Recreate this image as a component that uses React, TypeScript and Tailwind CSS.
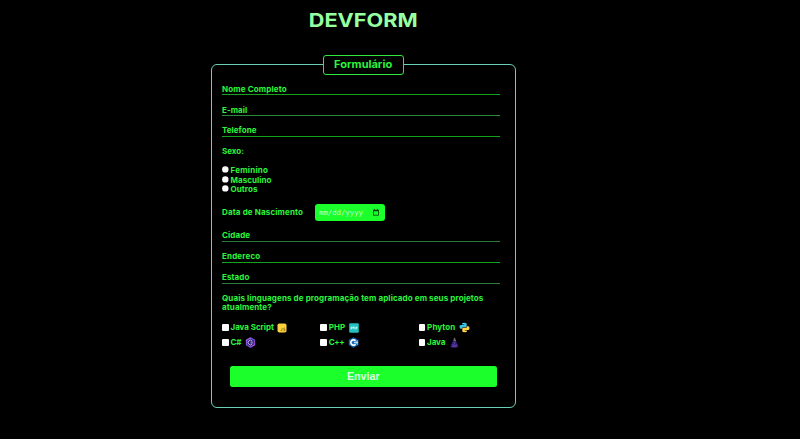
import type { ReactNode } from "react";

function Field({ label, track, line }: { label: string; track: string; line: string }) {
  return (
    <div className="h-[20.8px] w-[278px]">
      <div className={`flex h-[12.2px] items-center border-b pt-[1.8px] ${line}`}>
        <span className={track}>{label}</span>
      </div>
    </div>
  );
}

function Radio({ label, track }: { label: string; track: string }) {
  return (
    <label className="flex h-[9.6px] items-center gap-[1.5px]">
      <svg className="mb-[2px] size-[7px]" viewBox="0 0 7 7">
        <circle cx="3.3" cy="3.4" r="3.2" fill="#fff" />
      </svg>
      <span className={track}>{label}</span>
    </label>
  );
}

function Check({ label, track, children }: { label: string; track: string; children: ReactNode }) {
  return (
    <label className="flex h-[15px] items-center">
      <span className="mr-[2px] size-[6.5px] rounded-[1px] bg-white" />
      <span className={track}>{label}</span>
      <span className="ml-[3.5px] mt-[1px]">{children}</span>
    </label>
  );
}

function JsIcon() {
  return (
    <svg className="size-[10px]" viewBox="0 0 10 10">
      <rect x=".5" y=".5" width="9" height="9" rx="1.8" fill="#fbd13c" />
      <path d="M5 5v2.5H3.6M8 5.2H6.6v1.1H8v1.3H6.4" fill="none" stroke="#a57a22" strokeWidth=".8" />
    </svg>
  );
}

function PhpIcon() {
  return (
    <svg className="size-[10px]" viewBox="0 0 10 10">
      <rect x=".2" y=".2" width="9.6" height="9.6" rx="1" fill="#25bfc0" />
      <path d="M2 6.5V4h1.3v1.3H2M4.4 3.3v2.5M4.4 4.4h1.2v1.4M6.8 6.5V4H8v1.3H6.8" fill="none" stroke="#d5ffff" strokeWidth=".7" />
    </svg>
  );
}

function PythonIcon() {
  return (
    <svg className="size-[11px]" viewBox="0 0 11 11">
      <path d="M3 3V1.8Q3 .7 5.3.7T7.7 1.8v2.5q0 1-1 1H4q-1 0-1 1.5H1.8Q.5 6.8.5 4.8T1.8 3h3.4v-.4H3z" fill="#39c5df" />
      <path d="M8 8v1.2q0 1.1-2.3 1.1T3.3 9.2V6.7q0-1 1-1H7q1 0 1-1.5h1.2q1.3 0 1.3 2T9.2 8H5.8v.4H8z" fill="#ffd447" />
      <circle cx="4.2" cy="1.7" r=".4" fill="#fff" />
      <circle cx="6.8" cy="9.3" r=".4" fill="#fff" />
    </svg>
  );
}

function CSharpIcon() {
  return (
    <svg className="size-[11px]" viewBox="0 0 11 11">
      <defs>
        <linearGradient id="cs" x1="0" y1="0" x2="1" y2="1">
          <stop offset="0" stopColor="#a96ae8" />
          <stop offset=".5" stopColor="#5c45c0" />
          <stop offset="1" stopColor="#b052dc" />
        </linearGradient>
      </defs>
      <path d="M5.5 1 9.4 3.2v4.6L5.5 10 1.6 7.8V3.2z" fill="#2a1a66" stroke="url(#cs)" strokeWidth="1.5" strokeLinejoin="round" />
      <path d="M7.2 4A2.3 2.3 0 1 0 7.2 7" fill="none" stroke="#cbb5f5" strokeWidth=".9" />
      <path d="M5.4 5h2.4M5.4 6h2.4M6.2 4.4v2.3M7.1 4.4v2.3" stroke="#c8b4ef" strokeWidth=".4" />
    </svg>
  );
}

function CppIcon() {
  return (
    <svg className="size-[11px]" viewBox="0 0 11 11">
      <path d="M5.5.3 10.2 3v5L5.5 10.7.8 8V3z" fill="#1769b5" />
      <path d="M10.2 3 5.5 5.5 10.2 8z" fill="#5ba9e6" />
      <path d="M7.5 3.8A2.65 2.65 0 1 0 7.5 7.2" fill="none" stroke="#fff" strokeWidth="1.6" />
      <path d="M6.2 5.5h1.6M7 4.7v1.6M8.2 5.5h1.6M9 4.7v1.6" stroke="#fff" strokeWidth=".5" />
    </svg>
  );
}

function JavaIcon() {
  return (
    <svg className="size-[11px]" viewBox="0 0 11 11">
      <path d="M6 .3Q3.9 2 4.4 3.4L5 5h1.3L7.2 3.6Q6 2.5 6 .3z" fill="#706579" />
      <path d="M3.4 4.8 5.5 4l2 1 .8 3 1.4 1.4-2 1H3l-2-1 1.8-1.2z" fill="#332080" />
      <path d="M2.4 7.3 5 8.4l3.7-.5M3 9.6l4.6.1" fill="none" stroke="#7041b5" strokeWidth=".8" />
      <path d="M4.7 5.2 6 6.3" stroke="#9a719d" strokeWidth=".6" />
    </svg>
  );
}

function CalendarIcon() {
  return (
    <svg className="h-[7px] w-[6px]" viewBox="0 0 6 7">
      <rect x=".5" y="1.2" width="5" height="5" fill="none" stroke="#073c0b" strokeWidth=".8" />
      <path d="M.3 1.6h5.4M1.5.2v1M4.5.2v1" stroke="#073c0b" strokeWidth="1.1" />
    </svg>
  );
}

export default function App() {
  return (
    <div className="h-[439px] w-[800px] overflow-hidden bg-black font-['Inter','Liberation_Sans',sans-serif] text-[8px] leading-[9.6px] font-bold whitespace-nowrap text-[#2bf53c]">
      <h1 className="flex h-[55px] w-[726px] justify-center pt-[8px] text-[19.2px] leading-[24px] text-[#96ff9f]">
        <span className="inline-block h-[24px] scale-x-[1.13]">DEVFORM</span>
      </h1>
      <main className="ml-[211px] w-[305px]">
        <div className="relative z-10 mx-auto flex h-[19.5px] w-[81px] items-center justify-center rounded-[3px] border border-[#2ee83c] bg-black text-[10.3px]">
          <span className="inline-block scale-x-[1.07]">Formulário</span>
        </div>
        <form className="-mt-[10.5px] h-[344px] rounded-[6px] border border-[#68d2b6] pt-[18px] pl-[10px]">
          <Field label="Nome Completo" track="tracking-[0.15px]" line="border-[#12a31b]" />
          <Field label="E-mail" track="tracking-[0.05px]" line="border-[#2a8a3c]" />
          <Field label="Telefone" track="tracking-[0.05px]" line="border-[#12a31b]" />
          <div className="flex h-[21px] items-center pb-[8.2px]">Sexo:</div>
          <div className="mt-[-0.4px]">
            <Radio label="Feminino" track="tracking-[0.25px]" />
            <Radio label="Masculino" track="tracking-[0.05px]" />
            <Radio label="Outros" track="tracking-[0.1px]" />
          </div>
          <div className="mt-[9.6px] flex h-[17px] items-center">
            <span className="w-[93px] tracking-[0.14px]">Data de Nascimento</span>
            <span className="flex h-[17px] w-[69.5px] items-center justify-between rounded-[3px] bg-[#1bff2b] pr-[5.5px] pl-[4px] font-['DejaVu_Sans_Mono',monospace] text-[7.3px] font-normal text-[#c4ffc8]">
              mm/dd/yyyy
              <CalendarIcon />
            </span>
          </div>
          <div className="mt-[8.4px]">
            <Field label="Cidade" track="tracking-[0.1px]" line="border-[#2a7a3c]" />
            <Field label="Endereco" track="tracking-[0.15px]" line="border-[#12a31b]" />
            <Field label="Estado" track="tracking-[0.1px]" line="border-[#2a7a3c]" />
          </div>
          <p className="mt-[1.5px] tracking-[0.12px]">
            Quais linguagens de programação tem aplicado em seus projetos
            <br />
            atualmente?
          </p>
          <div className="mt-[7px] grid grid-cols-[98.3px_98.3px_90px]">
            <Check label="Java Script" track="tracking-[-0.05px]"><JsIcon /></Check>
            <Check label="PHP" track="tracking-[0.05px]"><PhpIcon /></Check>
            <Check label="Phyton" track="tracking-[0.1px]"><PythonIcon /></Check>
            <Check label="C#" track="tracking-[-0.1px]"><CSharpIcon /></Check>
            <Check label="C++" track="tracking-[-0.4px]"><CppIcon /></Check>
            <Check label="Java" track="tracking-[-0.1px]"><JavaIcon /></Check>
          </div>
          <button type="button" className="mt-[15.7px] ml-[7.5px] flex h-[21.5px] w-[267.5px] items-center justify-center rounded-[2.5px] bg-[#1bff2b] pt-[1px] font-['Liberation_Sans',sans-serif] text-[10.7px] text-[#dfffe1]">
            Enviar
          </button>
        </form>
      </main>
    </div>
  );
}
